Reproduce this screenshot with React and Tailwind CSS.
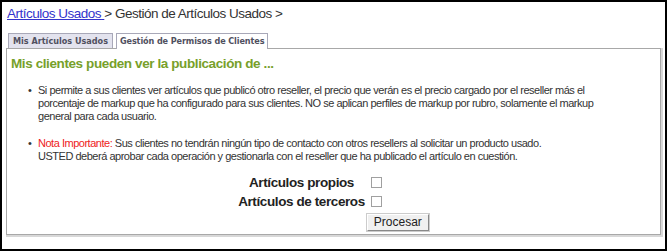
import React from "react";

// Gestión de Permisos de Clientes — tab panel with two checkbox options
export default function App() {
  return (
    <div
      className="w-[667px] h-[251px] border-2 border-black bg-white overflow-hidden"
      style={{ fontFamily: '"Liberation Sans", Arial, sans-serif' }}
    >
      {/* Breadcrumb */}
      <div className="pl-[5px] pt-[3px] text-[13.5px] tracking-[-0.5px] leading-[17px] text-[#333]">
        <a href="#" className="text-[#3333cc] underline">
          Artículos Usados{" "}
        </a>
        {" > Gestión de Artículos Usados >"}
      </div>

      {/* Tabs */}
      <div
        className="flex items-end gap-[3px] pl-[6px] mt-[11px]"
        style={{ fontFamily: '"DejaVu Sans Condensed", "DejaVu Sans", Tahoma, sans-serif' }}
      >
        <div className="h-[15px] px-[4px] border border-b-0 border-[#a8a8b8] bg-[#e3e3ee] text-[9px] leading-[14px] font-bold text-[#505060]">
          Mis Artículos Usados
        </div>
        <div className="h-[16px] -mb-px relative px-[3px] border border-b-0 border-[#a8a8b8] bg-white text-[9px] tracking-[-0.1px] leading-[15px] font-bold text-[#505060]">
          Gestión de Permisos de Clientes
        </div>
      </div>

      {/* Panel */}
      <div className="ml-[4px] w-[655px] h-[187px] border border-[#a8a8a8] shadow-[1px_1px_0_1px_#d8d8d8] px-[4px] pt-[6px]">
        <h2 className="text-[13.5px] tracking-[-0.4px] leading-[17px] font-bold text-[#77a02a]">
          Mis clientes pueden ver la publicación de ...
        </h2>

        <ul className="mt-[12px] pl-[27px] pr-[50px] text-[11px] tracking-[-0.48px] leading-[13px] text-[#333]">
          <li className="relative">
            <span className="absolute -left-[10px] top-0">•</span>
            Si permite a sus clientes ver artículos que publicó otro reseller, el
            precio que verán es el precio cargado por el reseller más el
            porcentaje de markup que ha configurado para sus clientes. NO se
            aplican perfiles de markup por rubro, solamente el markup general
            para cada usuario.
          </li>
          <li className="relative mt-[14px]">
            <span className="absolute -left-[10px] top-0">•</span>
            <span className="text-[#ee2222]">Nota Importante:</span> Sus clientes
            no tendrán ningún tipo de contacto con otros resellers al solicitar
            un producto usado.
            <br />
            USTED deberá aprobar cada operación y gestionarla con el reseller que
            ha publicado el artículo en cuestión.
          </li>
        </ul>

        {/* Options */}
        <div className="mt-[10px] flex justify-center">
          <div className="grid grid-cols-[auto_62px] items-center">
            <span className="text-center text-[13.5px] tracking-[-0.4px] leading-[19px] font-bold text-[#222] pr-[2px]">
              Artículos propios
            </span>
            <div className="pl-[4px] flex">
              <input type="checkbox" className="w-[11px] h-[11px] appearance-none border border-[#a0a0a0] bg-white" />
            </div>
            <span className="text-center text-[13.5px] tracking-[-0.4px] leading-[19px] font-bold text-[#222] pr-[2px]">
              Artículos de terceros
            </span>
            <div className="pl-[4px] flex">
              <input type="checkbox" className="w-[11px] h-[11px] appearance-none border border-[#a0a0a0] bg-white" />
            </div>
            <span />
            <button className="mt-[3px] h-[17px] w-[62px] text-[12px] leading-[15px] text-[#222] bg-[#f0f0f0] border border-t-[#fff] border-l-[#fff] border-r-[#888] border-b-[#888] shadow-[0_0_0_1px_#ccc]">
              Procesar
            </button>
          </div>
        </div>
      </div>
    </div>
  );
}
